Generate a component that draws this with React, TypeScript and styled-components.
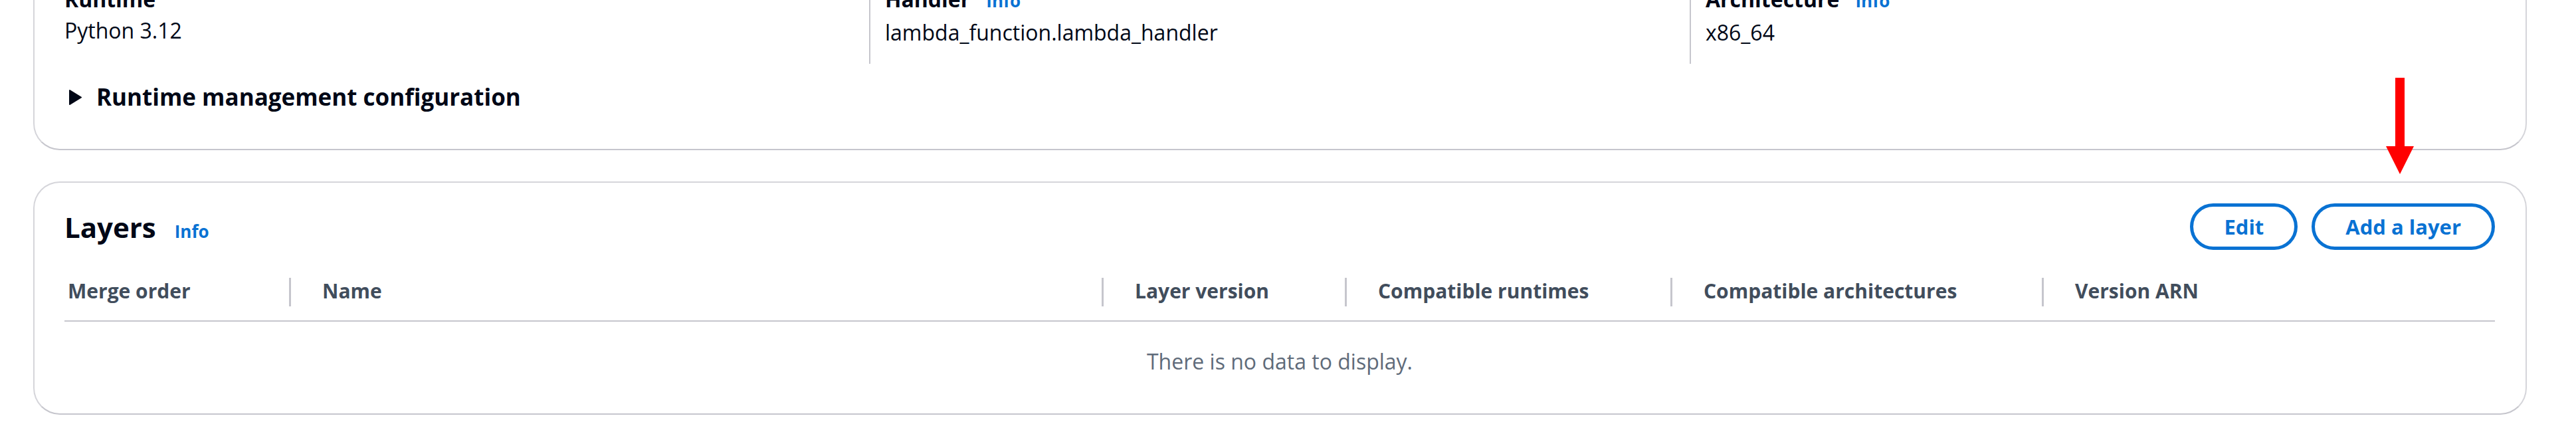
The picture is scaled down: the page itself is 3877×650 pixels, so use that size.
import styled, { createGlobalStyle, css } from "styled-components";

const GlobalStyle = createGlobalStyle`
  html, body {
    margin: 0;
    padding: 0;
    background: #ffffff;
    overflow: hidden;
  }
  body {
    font-family: "Open Sans", "Liberation Sans", Arial, sans-serif;
    color: #000716;
  }
`;

const Page = styled.div`
  position: relative;
  display: flex;
  flex-direction: column;
  gap: 47px;
  width: 3877px;
  box-sizing: border-box;
  padding: 0 74px 0 50px;
`;

const Card = styled.section<{ $pad: string; $offset?: number }>`
  margin-top: ${(p) => p.$offset ?? 0}px;
  padding: ${(p) => p.$pad};
  border: 2px solid #d5d5da;
  border-bottom-color: #c6c6cd;
  border-radius: 40px;
  background: #ffffff;
`;

const SettingsGrid = styled.div`
  display: grid;
  grid-template-columns: 1211px 1235px 1fr;
`;

const SettingsColumn = styled.div<{ $divided?: boolean }>`
  padding: 0 0 24px ${(p) => (p.$divided ? "22px" : "0")};
  border-left: ${(p) => (p.$divided ? "2px solid #c6c6cd" : "none")};
`;

const FieldLabel = styled.div`
  display: flex;
  align-items: baseline;
  gap: 24px;
  font-size: 32px;
  font-weight: 700;
  line-height: 47px;
`;

const FieldValue = styled.div`
  font-size: 32px;
  line-height: 47px;
`;

const InfoLink = styled.a`
  font-size: 26px;
  font-weight: 700;
  color: #0972d3;
  text-decoration: none;
`;

const ExpandToggle = styled.div`
  display: flex;
  align-items: center;
  gap: 22px;
  margin-top: 26px;
  padding-left: 7px;
  font-size: 35px;
  font-weight: 700;
  line-height: 48px;
`;

const CardHeader = styled.div`
  display: flex;
  justify-content: space-between;
  align-items: flex-start;
`;

const TitleGroup = styled.div`
  display: flex;
  align-items: baseline;
  gap: 28px;
  padding-top: 8px;
`;

const Title = styled.h2`
  margin: 0;
  font-size: 42px;
  font-weight: 700;
  line-height: 56px;
`;

const Actions = styled.div`
  display: flex;
  gap: 21px;
`;

const OutlineButton = styled.button`
  box-sizing: border-box;
  height: 70px;
  padding: 0 46px;
  border: 5px solid #0972d3;
  border-radius: 40px;
  background: #ffffff;
  color: #0972d3;
  font-family: "Open Sans", "Liberation Sans", Arial, sans-serif;
  font-size: 31px;
  font-weight: 700;
  line-height: 60px;
  cursor: pointer;
`;

const TableHead = styled.div`
  display: grid;
  grid-template-columns: 338px 1223px 366px 490px 559px 1fr;
  margin-top: 18px;
  border-bottom: 2px solid #c6c6cd;
`;

const HeadCell = styled.div<{ $first?: boolean }>`
  position: relative;
  padding: 20px 0 20px ${(p) => (p.$first ? "5px" : "50px")};
  font-size: 30px;
  font-weight: 700;
  line-height: 48px;
  color: #414d5c;
  white-space: nowrap;

  ${(p) =>
    !p.$first &&
    css`
      &::before {
        content: "";
        position: absolute;
        left: 0;
        top: 24px;
        width: 3px;
        height: 43px;
        background: #c6c6cd;
      }
    `}
`;

const EmptyState = styled.div`
  padding: 36px 0 20px;
  text-align: center;
  font-size: 32px;
  line-height: 48px;
  color: #5f6b7a;
`;

const Arrow = styled.svg`
  position: absolute;
  left: 3591px;
  top: 117px;
`;

const settings = [
  { label: "Runtime", value: "Python 3.12", info: false },
  { label: "Handler", value: "lambda_function.lambda_handler", info: true },
  { label: "Architecture", value: "x86_64", info: true },
];

const columns = [
  "Merge order",
  "Name",
  "Layer version",
  "Compatible runtimes",
  "Compatible architectures",
  "Version ARN",
];

export default function App() {
  return (
    <>
      <GlobalStyle />
      <Page>
        <Card $offset={-76} $pad="49px 46px 54px 45px">
          <SettingsGrid>
            {settings.map((s, i) => (
              <SettingsColumn key={s.label} $divided={i > 0}>
                <FieldLabel>
                  {s.label}
                  {s.info && <InfoLink href="#">Info</InfoLink>}
                </FieldLabel>
                <FieldValue>{s.value}</FieldValue>
              </SettingsColumn>
            ))}
          </SettingsGrid>
          <ExpandToggle>
            <svg width="19" height="23" viewBox="0 0 19 23">
              <polygon points="1,1 18,11.5 1,22" fill="#000716" stroke="#000716" strokeWidth="2" strokeLinejoin="round" />
            </svg>
            Runtime management configuration
          </ExpandToggle>
        </Card>

        <Card $pad="31px 46px 34px 45px">
          <CardHeader>
            <TitleGroup>
              <Title>Layers</Title>
              <InfoLink href="#">Info</InfoLink>
            </TitleGroup>
            <Actions>
              <OutlineButton>Edit</OutlineButton>
              <OutlineButton>Add a layer</OutlineButton>
            </Actions>
          </CardHeader>
          <TableHead>
            {columns.map((c, i) => (
              <HeadCell key={c} $first={i === 0}>
                {c}
              </HeadCell>
            ))}
          </TableHead>
          <EmptyState>There is no data to display.</EmptyState>
        </Card>

        <Arrow width="42" height="145" viewBox="0 0 42 145">
          <rect x="14" y="0" width="14" height="104" fill="#ff0000" />
          <polygon points="0,103 42,103 21,145" fill="#ff0000" />
        </Arrow>
      </Page>
    </>
  );
}
